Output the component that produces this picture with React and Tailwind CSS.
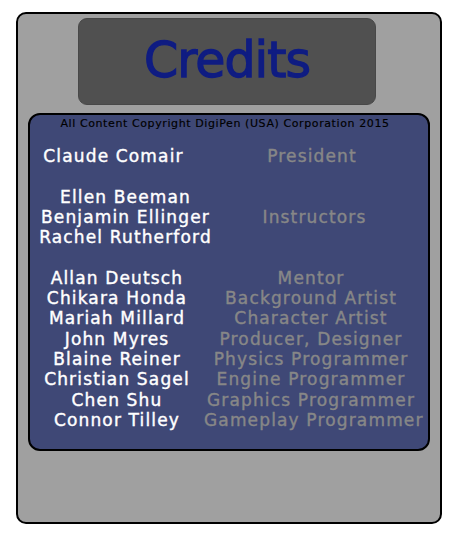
import React from "react";

const sections = [
  { cols: "grid-cols-[167px_230px]", rows: [["Claude Comair", "President"]] },
  {
    cols: "grid-cols-[191px_187px]",
    rows: [
      ["Ellen Beeman", ""],
      ["Benjamin Ellinger", "Instructors"],
      ["Rachel Rutherford", ""],
    ],
  },
  {
    cols: "grid-cols-[174px_214px]",
    rows: [
      ["Allan Deutsch", "Mentor"],
      ["Chikara Honda", "Background Artist"],
      ["Mariah Millard", "Character Artist"],
      ["John Myres", "Producer, Designer"],
      ["Blaine Reiner", "Physics Programmer"],
      ["Christian Sagel", "Engine Programmer"],
      ["Chen Shu", "Graphics Programmer"],
      ["Connor Tilley", "Gameplay Programmer"],
    ],
  },
];

export default function App() {
  return (
    <div className="w-[454px] h-[540px] bg-white pt-[12px] pl-[16px] font-['DejaVu_Sans',sans-serif]">
      <div className="w-[426px] h-[512px] border-2 border-black rounded-[10px] bg-[#a0a0a0] pt-[4px]">
        <div className="ml-[60px] w-[298px] h-[87px] rounded-[9px] bg-[#505050] border border-[#484848] flex items-center justify-center">
          <span className="text-[49px] leading-none tracking-[-1px] text-[#0f1c82] [-webkit-text-stroke:1.3px_#0f1c82] pb-[2px]">Credits</span>
        </div>
        <div className="ml-[10px] mt-[8px] w-[402px] h-[338px] border-2 border-black rounded-[12px] bg-[#3f4876] pt-[2px]">
          <div className="pr-[8px] text-center text-[11px] leading-[14px] tracking-[0.6px] text-black [-webkit-text-stroke:0.15px_black]">
            All Content Copyright DigiPen (USA) Corporation 2015
          </div>
          <div className="mt-[15px] flex flex-col gap-[20.3px] text-[17px] leading-[20.3px] tracking-[1.15px]">
            {sections.map((s, si) => (
              <div key={si} className={`grid ${s.cols}`}>
                {s.rows.map(([n, r], i) => (
                  <React.Fragment key={i}>
                    <div className="text-center text-white whitespace-nowrap h-[20.3px] [-webkit-text-stroke:0.4px_white]">{n}</div>
                    <div className="text-center text-[#878787] whitespace-nowrap h-[20.3px] [-webkit-text-stroke:0.4px_#878787]">{r}</div>
                  </React.Fragment>
                ))}
              </div>
            ))}
          </div>
        </div>
      </div>
    </div>
  );
}
